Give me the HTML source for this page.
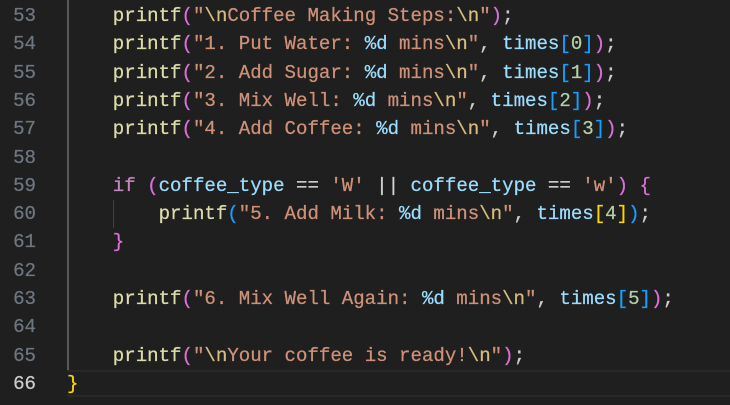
<!DOCTYPE html>
<html><head><style>
body{margin:0;width:730px;height:405px;background:#1f1f1f;overflow:hidden;position:relative;font-family:"Liberation Mono",monospace;font-size:19.08px;-webkit-text-stroke:0.25px currentColor;}
.ln{position:absolute;left:0;width:36px;text-align:right;color:#6e7681;height:28.3px;line-height:28.3px}
.c{position:absolute;left:67px;white-space:pre;height:28.3px;line-height:28.3px;color:#cccccc}
.f{color:#dcdcaa}.s{color:#ce9178}.e{color:#d7ba7d}.v{color:#9cdcfe}.n{color:#b5cea8}.k{color:#c586c0}
.g{color:#ffd700}.p{color:#da70d6}.b{color:#179fff}.o{color:#d4d4d4}
.guide{position:absolute;left:67px;top:0;width:1.5px;height:370px;background:#585858}
.guide2{position:absolute;left:113px;top:200px;width:1px;height:28px;background:#404040}
.cur{position:absolute;left:67px;right:0;top:370px;height:27px;border-top:2px solid #282828;border-bottom:2px solid #282828;box-sizing:border-box}
</style></head><body>
<div class="guide"></div><div class="guide2"></div><div class="cur"></div>
<div class="ln" style="top:2px">53</div>
<div class="ln" style="top:30.3px">54</div>
<div class="ln" style="top:58.6px">55</div>
<div class="ln" style="top:86.9px">56</div>
<div class="ln" style="top:115.2px">57</div>
<div class="ln" style="top:143.5px">58</div>
<div class="ln" style="top:171.8px">59</div>
<div class="ln" style="top:200.1px">60</div>
<div class="ln" style="top:228.4px">61</div>
<div class="ln" style="top:256.7px">62</div>
<div class="ln" style="top:285px">63</div>
<div class="ln" style="top:313.3px">64</div>
<div class="ln" style="top:341.6px">65</div>
<div class="ln" style="top:369.9px;color:#cccccc">66</div>
<div class="c" style="top:2px">    <span class="f">printf</span><span class="p">(</span><span class="s">"</span><span class="e">\n</span><span class="s">Coffee Making Steps:</span><span class="e">\n</span><span class="s">"</span><span class="p">)</span>;</div>
<div class="c" style="top:30.3px">    <span class="f">printf</span><span class="p">(</span><span class="s">"1. Put Water: </span><span class="v">%d</span><span class="s"> mins</span><span class="e">\n</span><span class="s">"</span>, <span class="v">times</span><span class="b">[</span><span class="n">0</span><span class="b">]</span><span class="p">)</span>;</div>
<div class="c" style="top:58.6px">    <span class="f">printf</span><span class="p">(</span><span class="s">"2. Add Sugar: </span><span class="v">%d</span><span class="s"> mins</span><span class="e">\n</span><span class="s">"</span>, <span class="v">times</span><span class="b">[</span><span class="n">1</span><span class="b">]</span><span class="p">)</span>;</div>
<div class="c" style="top:86.9px">    <span class="f">printf</span><span class="p">(</span><span class="s">"3. Mix Well: </span><span class="v">%d</span><span class="s"> mins</span><span class="e">\n</span><span class="s">"</span>, <span class="v">times</span><span class="b">[</span><span class="n">2</span><span class="b">]</span><span class="p">)</span>;</div>
<div class="c" style="top:115.2px">    <span class="f">printf</span><span class="p">(</span><span class="s">"4. Add Coffee: </span><span class="v">%d</span><span class="s"> mins</span><span class="e">\n</span><span class="s">"</span>, <span class="v">times</span><span class="b">[</span><span class="n">3</span><span class="b">]</span><span class="p">)</span>;</div>
<div class="c" style="top:171.8px">    <span class="k">if</span> <span class="p">(</span><span class="v">coffee_type</span> <span class="o">==</span> <span class="s">'W'</span> <span class="o">||</span> <span class="v">coffee_type</span> <span class="o">==</span> <span class="s">'w'</span><span class="p">)</span> <span class="p">{</span></div>
<div class="c" style="top:200.1px">        <span class="f">printf</span><span class="b">(</span><span class="s">"5. Add Milk: </span><span class="v">%d</span><span class="s"> mins</span><span class="e">\n</span><span class="s">"</span>, <span class="v">times</span><span class="g">[</span><span class="n">4</span><span class="g">]</span><span class="b">)</span>;</div>
<div class="c" style="top:228.4px">    <span class="p">}</span></div>
<div class="c" style="top:285px">    <span class="f">printf</span><span class="p">(</span><span class="s">"6. Mix Well Again: </span><span class="v">%d</span><span class="s"> mins</span><span class="e">\n</span><span class="s">"</span>, <span class="v">times</span><span class="b">[</span><span class="n">5</span><span class="b">]</span><span class="p">)</span>;</div>
<div class="c" style="top:341.6px">    <span class="f">printf</span><span class="p">(</span><span class="s">"</span><span class="e">\n</span><span class="s">Your coffee is ready!</span><span class="e">\n</span><span class="s">"</span><span class="p">)</span>;</div>
<div class="c" style="top:369.9px"><span class="g">}</span></div>
</body></html>
